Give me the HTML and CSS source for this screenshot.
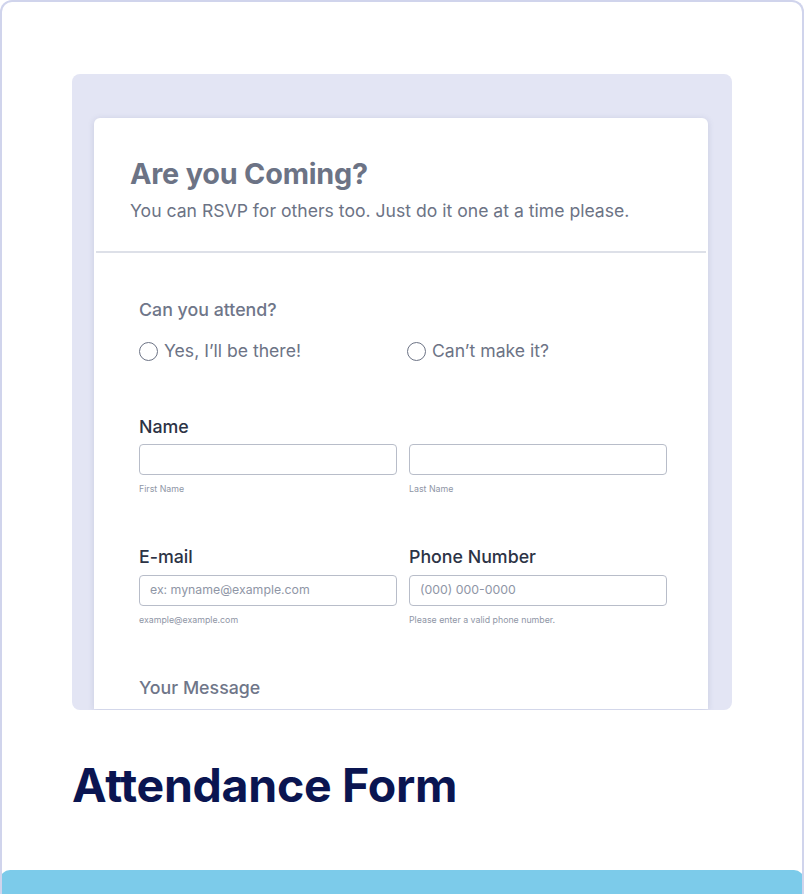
FILE: index.html
```html
<!DOCTYPE html>
<html>
<head>
<meta charset="utf-8">
<link rel="stylesheet" href="styles.css">
</head>
<body>
<div class="frame">
  <div class="panel">
    <div class="card">
      <div class="card-head">
        <h1 class="form-title">Are you Coming?</h1>
        <p class="form-sub">You can RSVP for others too. Just do it one at a time please.</p>
      </div>
      <div class="card-body">
        <div class="q-label muted">Can you attend?</div>
        <div class="radios">
          <label class="radio"><span class="circle"></span>Yes, I’ll be there!</label>
          <label class="radio"><span class="circle"></span>Can’t make it?</label>
        </div>

        <div class="field-label name-label">Name</div>
        <div class="row">
          <div class="col">
            <div class="input"></div>
            <div class="hint">First Name</div>
          </div>
          <div class="col">
            <div class="input"></div>
            <div class="hint">Last Name</div>
          </div>
        </div>

        <div class="row row-email">
          <div class="col">
            <div class="field-label">E-mail</div>
            <div class="input input-gap"><span class="ph">ex: myname@example.com</span></div>
            <div class="hint">example@example.com</div>
          </div>
          <div class="col">
            <div class="field-label">Phone Number</div>
            <div class="input input-gap"><span class="ph">(000) 000-0000</span></div>
            <div class="hint">Please enter a valid phone number.</div>
          </div>
        </div>

        <div class="q-label muted msg-label">Your Message</div>
      </div>
    </div>
  </div>
  <h2 class="page-title">Attendance Form</h2>
  <div class="bar"></div>
</div>
</body>
</html>
```

FILE: styles.css
```css
html, body {
  margin: 0;
  padding: 0;
  background: #ffffff;
}
body {
  font-family: "Inter", "Liberation Sans", sans-serif;
}
.frame {
  width: 804px;
  height: 894px;
  box-sizing: border-box;
  border: 2px solid #d0d4ec;
  border-bottom: none;
  border-radius: 12px 12px 0 0;
  display: flex;
  flex-direction: column;
  overflow: hidden;
}
.panel {
  margin: 72px 0 0 70px;
  width: 660px;
  height: 636px;
  background: #e3e5f4;
  border-radius: 8px;
  box-sizing: border-box;
  padding: 44px 24px 0 22px;
  overflow: hidden;
}
.card {
  background: #ffffff;
  height: 591px;
  border-radius: 6px 6px 0 0;
  box-shadow: 0 1px 6px rgba(80, 90, 140, 0.18);
}
.card-head {
  padding: 38px 36px 0 34px;
  height: 95px;
  border-bottom: 2px solid #dde0e8;
  margin: 0 2px;
}
.form-title {
  margin: 0;
  font-size: 28.8px;
  line-height: 36px;
  font-weight: 700;
  color: #6c7385;
  letter-spacing: -0.2px;
}
.form-sub {
  margin: 8px 0 0 0;
  font-size: 17.6px;
  line-height: 22px;
  color: #6c7385;
  font-weight: 400;
}
.card-body {
  padding: 45px 41px 0 45px;
}
.q-label {
  font-size: 17.8px;
  line-height: 24px;
  font-weight: 500;
}
.muted {
  color: #6f7689;
}
.radios {
  display: grid;
  grid-template-columns: 268px 1fr;
  margin-top: 17px;
}
.radio {
  display: flex;
  align-items: center;
  gap: 6px;
  font-size: 17.6px;
  line-height: 24px;
  color: #6c7385;
}
.circle {
  width: 17px;
  height: 17px;
  border: 1.6px solid #6c7385;
  border-radius: 50%;
  flex: none;
}
.field-label {
  font-size: 17.8px;
  line-height: 24px;
  font-weight: 500;
  color: #2c3345;
}
.name-label {
  margin-top: 52px;
}
.row {
  display: grid;
  grid-template-columns: 258px 258px;
  column-gap: 12px;
}
.name-label + .row {
  margin-top: 5px;
}
.row-email {
  margin-top: 49px;
}
.input {
  height: 31px;
  box-sizing: border-box;
  border: 1px solid #b8bdc9;
  border-radius: 4px;
  display: flex;
  align-items: center;
  padding: 0 10px;
}
.input-gap {
  margin-top: 6px;
}
.ph {
  font-size: 12.3px;
  color: #8f96a6;
  margin-top: -2px;
}
.hint {
  margin-top: 7px;
  font-size: 8.8px;
  line-height: 14px;
  color: #8f96a6;
}
.msg-label {
  margin-top: 49px;
}
.page-title {
  margin: 47px 0 0 70px;
  font-size: 46.5px;
  line-height: 56px;
  font-weight: 700;
  color: #0a1551;
  letter-spacing: -0.3px;
}
.bar {
  margin: auto -2px 0 -2px;
  height: 24px;
  background: #7ccbea;
  border-radius: 10px 10px 0 0;
}
```
